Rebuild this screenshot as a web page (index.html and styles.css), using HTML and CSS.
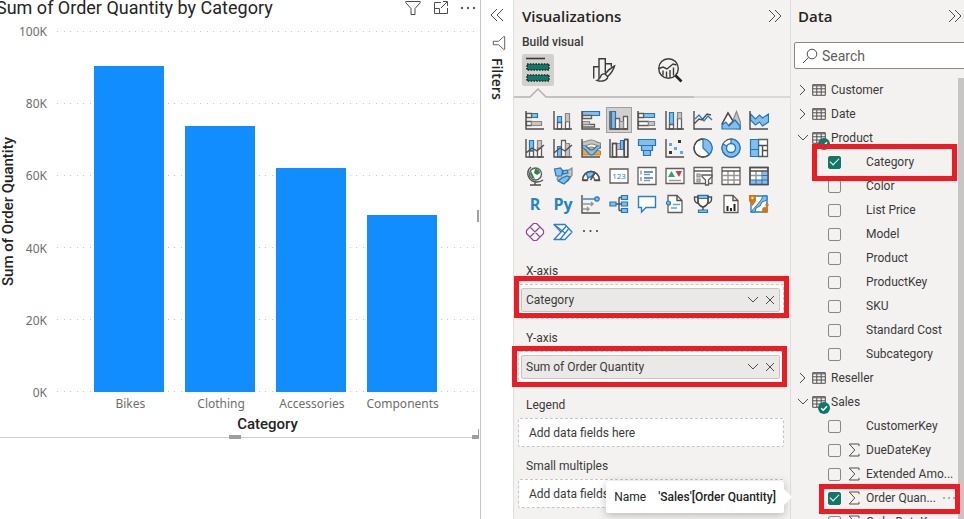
FILE: index.html
```html
<!DOCTYPE html>
<html lang="en">
<head>
<meta charset="utf-8">
<title>Report editor</title>
<link rel="stylesheet" href="styles.css">
</head>
<body>
<svg class="defs" aria-hidden="true">
  <symbol id="chevrons" viewBox="0 0 14 14"><path class="line" d="M1 1l6 6-6 6M7 1l6 6-6 6"/></symbol>
  <symbol id="chevron" viewBox="0 0 12 12"><path class="line" d="M1 3l5 5 5-5"/></symbol>
  <symbol id="cross" viewBox="0 0 10 10"><path class="line" d="M1 1l8 8M9 1L1 9"/></symbol>
  <symbol id="funnel" viewBox="0 0 16 16"><path class="line" d="M.8 1.5h14.4v1.2L10 8.5v6H6v-6L.8 2.7z"/></symbol>
  <symbol id="table" viewBox="0 0 14 12"><path class="line" d="M.7.7h12.6v10.6H.7zM.7 1.8h12.6M.7 4.8h12.6M.7 8h12.6M4.8 2v9M9.2 2v9"/></symbol>
  <symbol id="sigma" viewBox="0 0 12 14"><path class="line" d="M11 3.2V1H1.2l5.6 6-5.6 6H11v-2.2"/></symbol>
  <symbol id="badge" viewBox="0 0 12 12"><circle cx="6" cy="6" r="6" fill="#117865"/><path d="M3.2 6.2l2 2 3.800-4" fill="none" stroke="#fff" stroke-width="1.5"/></symbol>
</svg>

<main class="app">
  <section class="canvas">
    <article class="visual">
      <header class="visual-head">
        <h2>Sum of Order Quantity by Category</h2>
        <div class="visual-tools">
          <button aria-label="Filter"><svg width="18" height="16"><use href="#funnel"/></svg></button>
          <button aria-label="Focus mode"><svg width="16" height="16" viewBox="0 0 16 16"><path class="line" d="M8 2.500H1.500v11h13V8M1.500 8.500h5v5M8 8l6-6M10 1.500h4.500V6"/></svg></button>
          <button aria-label="More options"><svg width="16" height="16" viewBox="0 0 16 16" fill="#605e5c"><circle cx="2" cy="8" r="1.2"/><circle cx="8" cy="8" r="1.2"/><circle cx="14" cy="8" r="1.2"/></svg></button>
        </div>
      </header>
      <div class="chart">
        <div class="y-title"><span>Sum of Order Quantity</span></div>
        <div class="y-scale"><span>100K</span><span>80K</span><span>60K</span><span>40K</span><span>20K</span><span>0K</span></div>
        <div class="plot">
          <div class="gridlines"><i></i><i></i><i></i><i></i><i></i><i></i></div>
          <div class="bars">
            <div class="bar" style="height:90.3%"></div>
            <div class="bar" style="height:73.7%"></div>
            <div class="bar" style="height:62%"></div>
            <div class="bar" style="height:49.1%"></div>
          </div>
        </div>
        <div class="x-scale"><span>Bikes</span><span>Clothing</span><span>Accessories</span><span>Components</span></div>
        <div class="x-title">Category</div>
      </div>
      <span class="grip grip-bottom"></span>
      <span class="grip grip-right"></span>
      <span class="grip grip-corner"></span>
    </article>
  </section>

  <aside class="filters">
    <button aria-label="Expand filters"><svg class="flip" width="14" height="14"><use href="#chevrons"/></svg></button>
    <svg class="turn" width="14" height="14"><use href="#funnel"/></svg>
    <h2>Filters</h2>
  </aside>

  <aside class="viz">
    <header class="pane-head">
      <h2>Visualizations</h2>
      <button aria-label="Collapse visualizations"><svg width="14" height="14"><use href="#chevrons"/></svg></button>
    </header>
    <h3>Build visual</h3>
    <div class="tabs">
      <button class="tab on" aria-label="Build visual"><svg width="32" height="32" viewBox="0 0 32 32"><path d="M4 4.500h19" stroke="#3b3a39" stroke-width="1.6"/><path d="M5 10h22v6H5zM5 21h22v6H5z" fill="#117865" stroke="#252423" stroke-width="1.6" stroke-dasharray="1.6 1.2"/></svg></button>
      <button class="tab" aria-label="Format visual"><svg width="24" height="26" viewBox="0 0 24 26" fill="none" stroke="#3b3a39" stroke-width="1.4"><path d="M1.700 20V9.700H7V23M7 10V1.700h6.300v14M13.300 6.700h6v3M1.700 20v1.500"/><path d="M22.500 9c-3 1.500-7 5-9.500 8l2.600 2.500C18.600 17 21.500 12.500 22.500 9zM12.800 17c-2.300-.4-3.600.7-4.200 2.600-.5 1.700-1.600 3-3.600 3.700 3.400 1.400 8.300 1 10.200-1.800.7-1 .6-1.800.3-2.300" fill="#f3f2f1"/></svg></button>
      <button class="tab" aria-label="Analytics"><svg width="26" height="26" viewBox="0 0 26 26" fill="none" stroke="#3b3a39" stroke-width="1.4"><circle cx="11.5" cy="11.5" r="9.8"/><path d="M2 11.500l4-1.500 4 2 6-5 3.500 1M6 13.500v5M9.500 14.500v6M13 13v7.500M16.500 10.500v8"/><path d="M18.500 18.500l6 6" stroke="#252423" stroke-width="2.6"/></svg></button>
    </div>
    <svg class="tab-line" height="10" width="100%"><path d="M180 9h100" stroke="#dad8d6" stroke-width="2"/><path d="M0 9h16l8-8 8 8h148" fill="none" stroke="#b5b3b1" stroke-width="1.5"/></svg>

    <div class="gallery">
      <button aria-label="Stacked bar chart"><svg viewBox="0 0 20 20"><path class="b" d="M6.500 3.500h6v4h-6z"/><path class="w" d="M1.500 3.500h5v4h-5zM1.500 11.500h5v4h-5z"/><path class="g" d="M6.500 11.500h10v4h-10z"/><path class="k" d="M1 1v18h18"/></svg></button>
      <button aria-label="Stacked column chart"><svg viewBox="0 0 20 20"><path class="b" d="M4.500 6.500h4v6h-4z"/><path class="w" d="M4.500 12.500h4V19h-4zM12.500 11.500h4V19h-4z"/><path class="g" d="M12.500 3.500h4v8h-4z"/><path class="k" d="M1 1v18h18"/></svg></button>
      <button aria-label="Clustered bar chart"><svg viewBox="0 0 20 20"><path class="b" d="M1.500 1.500h17v4h-17z"/><path class="w" d="M1.500 5.500h9v3h-9zM1.500 14.500h12V17h-12z"/><path class="g" d="M1.500 11.500h7v3h-7z"/><path class="k" d="M1 1v18h18"/></svg></button>
      <button class="picked" aria-label="Clustered column chart"><svg viewBox="0 0 20 20"><path class="b" d="M2.500 1.500h4V19h-4z"/><path class="w" d="M6.500 8.500h4V19h-4zM14.500 6.500h4V19h-4z"/><path class="g" d="M10.500 11.500h4V19h-4z"/><path class="k" d="M1 1v18h18"/></svg></button>
      <button aria-label="100% stacked bar chart"><svg viewBox="0 0 20 20"><path class="b" d="M6.500 3.500h11v4h-11z"/><path class="w" d="M1.500 3.500h5v4h-5zM1.500 11.500h10v4h-10z"/><path class="g" d="M11.500 11.500h6v4h-6z"/><path class="k" d="M1 1v18h18"/></svg></button>
      <button aria-label="100% stacked column chart"><svg viewBox="0 0 20 20"><path class="b" d="M4.500 2.500h4v12h-4z"/><path class="w" d="M4.500 14.500h4V19h-4zM12.500 8.500h4V19h-4z"/><path class="g" d="M12.500 2.500h4v6h-4z"/><path class="k" d="M1 1v18h18"/></svg></button>
      <button aria-label="Line chart"><svg viewBox="0 0 20 20"><path class="bl" d="M2 9l4-4 5 6 4-5 4 4"/><path class="k" d="M1 14l5-5 3 1 5-6 4 1M1 1v18h18"/></svg></button>
      <button aria-label="Area chart"><svg viewBox="0 0 20 20"><path class="g" d="M9 18l6.500-16.500 4 11V19z"/><path class="w" d="M1 14L7 3l5 8-6 6z"/><path class="b" d="M1 19v-4l4-3 3 4 6-6 5 6v3z"/><path class="k" d="M1 14L7 3l5 8"/></svg></button>
      <button aria-label="Stacked area chart"><svg viewBox="0 0 20 20"><path class="b" d="M1.500 4l5 5 4-4 3 3 6-4v8l-6 4-3-4-4 3-5-5z"/><path class="k" d="M1 1v18h18"/></svg></button>

      <button aria-label="Line and stacked column chart"><svg viewBox="0 0 20 20"><path class="b" d="M4.500 2.500h4V13h-4z"/><path class="w" d="M4.500 13h4v6h-4zM12.500 10h4v9h-4z"/><path class="g" d="M12.500 2.500h4V10h-4z"/><path class="k" d="M1 1v18h18M1 15l6-5 5 3 7-6"/></svg></button>
      <button aria-label="Line and clustered column chart"><svg viewBox="0 0 20 20"><path class="b" d="M4.500 8.500h4V19h-4z"/><path class="w" d="M8.500 2.500h4V19h-4z"/><path class="g" d="M12.500 5.500h4V19h-4z"/><path class="k" d="M1 1v18h18M1 15l6-5 5 3 7-6"/></svg></button>
      <button aria-label="Ribbon chart"><svg viewBox="0 0 20 20"><path d="M1.500 12c4 0 5-3 9-3s5 4 9 4v4H1.500z" fill="#f2a33c" stroke="#d67a10"/><path class="b" d="M1.500 6c4 0 5 6 9 6s5-6 9-6v4c-4 0-5 7-9 7s-5-7-9-7z"/><path class="g" d="M1.500 4c4 0 5-2 9-2s5 3 9 3v3c-4 0-5-2-9-2s-5 3-9 1z"/><path class="k" d="M1 1v18h18"/></svg></button>
      <button aria-label="Waterfall chart"><svg viewBox="0 0 20 20"><path class="w" d="M3.500 5.500h4V19h-4zM15.500 1.500h3V19h-3z"/><path class="g" d="M7.500 5.500h4v6h-4z"/><path class="b" d="M11.500 2.500h3v9h-3z"/><path class="k" d="M1 1v18h18V1.500h-4M3.500 18V5.500h4V18M15 18V2"/></svg></button>
      <button aria-label="Funnel"><svg viewBox="0 0 20 20"><path class="b" d="M1.500 1.500h17v6h-17zM4.500 7.500h11v5h-11zM6.500 12.500h7v5h-7z"/></svg></button>
      <button aria-label="Scatter chart"><svg viewBox="0 0 20 20"><path d="M13 2h3v3h-3zM4 13h3v3H4z" fill="#3b3a39"/><path d="M4 5h3v3H4zM9 9h3v3H9zM15 13h3v3h-3z" fill="#62a8e0"/><path class="k" d="M1 1v18h18"/></svg></button>
      <button aria-label="Pie chart"><svg viewBox="0 0 20 20"><circle class="w" cx="10" cy="10" r="9"/><path class="b" d="M10 1v9l6.400 6.400A9 9 0 0 0 10 1z"/><path class="k" d="M16.400 16.400A9 9 0 1 1 10 1"/></svg></button>
      <button aria-label="Donut chart"><svg viewBox="0 0 20 20"><circle class="w" cx="10" cy="10" r="9"/><path class="b" d="M10 1a9 9 0 1 1-8 5l4 2a4.500 4.500 0 1 0 4-2.500z"/><circle cx="10" cy="10" r="4.5" fill="#f3f2f1" stroke="#1f77be" stroke-width="1.3"/></svg></button>
      <button aria-label="Treemap"><svg viewBox="0 0 20 20"><path class="w" d="M9.500 1.500h9v17h-9z"/><path class="b" d="M1.500 1.500h8v10h-8zM1.500 11.500h8v7h-8z"/><path d="M9.500 7.500h9M13.500 7.500v11M13.500 12.500h5" class="k"/></svg></button>

      <button aria-label="Map"><svg viewBox="0 0 20 20"><circle cx="10.5" cy="8" r="6" fill="#fff" stroke="#605e5c" stroke-width="1.4"/><path d="M10 3c3 0 5 2 5 4l-3 2-3-2zM6 5l2 4 2 4-3-1-2-4z" fill="#258a46"/><path class="k" d="M6 1C0 6 3 16 12 16c2 0 4-.5 6-2M10 16v3M5 19h11"/></svg></button>
      <button aria-label="Filled map"><svg viewBox="0 0 20 20"><path class="g" d="M9 4l5 1 5-3v7l-4 6-6 2-5-4z"/><path class="b" d="M1.500 3l6-1 2 3-1 5H3zM9 12l5-2 3 1-3 4-3 3-6-3zM10 5l4-1 1 3-5 1z"/></svg></button>
      <button aria-label="Gauge"><svg viewBox="0 0 20 20"><path class="w" d="M1.500 14a8.500 8.500 0 0 1 17 0h-5a3.500 3.500 0 0 0-7 0z"/><path class="b" d="M5 7a8.500 8.500 0 0 1 9-.5L10 11a3.500 3.500 0 0 0-3 1z"/><path class="k" d="M9.500 14L14 7M1.500 14.500h5M1.500 14a8.500 8.500 0 0 1 17 0v.5h-5"/></svg></button>
      <button aria-label="Card"><svg viewBox="0 0 20 20"><path class="w" d="M1 3h18v14H1z"/><text x="10" y="13" class="digits">123</text></svg></button>
      <button aria-label="Multi-row card"><svg viewBox="0 0 20 20"><path class="w" d="M1 1.500h18v17H1z"/><path class="bl" d="M7 6h9M7 12h9"/><path class="gl" d="M4 4.500v4M4 11v4M7 8.500h6M7 14.500h6"/></svg></button>
      <button aria-label="KPI"><svg viewBox="0 0 20 20"><path class="w" d="M1 2.500h18v15H1z"/><path d="M3 11l3.500-6L10 11z" fill="#3ba45d"/><path d="M10.500 5h6.500l-3 6z" fill="#e0344a"/><path class="gl" d="M4 14.500h12"/></svg></button>
      <button aria-label="Slicer"><svg viewBox="0 0 20 20"><path class="w" d="M1 1.500h18v16H1z"/><path class="k" d="M1 5h18"/><path class="g" d="M4 8h3v3H4zM4 13h3v3H4z"/><path class="w" d="M9 9h10v1.500L15.500 14v5h-3v-5L9 10.500z"/></svg></button>
      <button aria-label="Table"><svg viewBox="0 0 20 20"><path class="w" d="M1 1.500h18v17H1z"/><path class="gl" d="M1 9.500h18M1 14h18M7 5v13M13 5v13"/><path class="k" d="M1 5h18"/></svg></button>
      <button aria-label="Matrix"><svg viewBox="0 0 20 20"><path class="w" d="M1 1.500h18v17H1z"/><path class="gl" d="M1 9.500h12M7 5v9"/><path d="M13.500 5.500H19v13H1V14h12.500z" fill="#83beec"/><path d="M13 5v13M7 14v4M1 14h18M13 9.500h6" fill="none" stroke="#1f77be"/><path class="k" d="M1 5h18M1 1.500h18v17H1z"/></svg></button>

      <button class="lang" aria-label="R script visual">R</button>
      <button class="lang" aria-label="Python visual">Py</button>
      <button aria-label="Key influencers"><svg viewBox="0 0 20 20"><path class="k" d="M1 1v18h18"/><path class="bl" d="M2 5h12"/><circle class="b" cx="16" cy="5" r="2.2"/><path class="gl" d="M2 10h10M2 15h6M10 8l2 2-2 2M6 13l2 2-2 2"/></svg></button>
      <button aria-label="Decomposition tree"><svg viewBox="0 0 20 20"><path class="k" d="M7 10h6M10 3.500v13M10 3.500h3M10 16.500h3"/><path class="b" d="M1 8h6v4H1zM12.500 1.500h6v4h-6zM12.500 8h6v4h-6zM12.500 14.500h6v4h-6z"/></svg></button>
      <button aria-label="Q&amp;A"><svg viewBox="0 0 20 20"><path d="M1.500 2.500h17v11H9L4.500 18v-4.500h-3z" fill="#fff" stroke="#2b7fc3" stroke-width="1.4"/></svg></button>
      <button aria-label="Smart narrative"><svg viewBox="0 0 20 20"><path class="w" d="M3 1.500h9l5 5v12H3z"/><path class="k" d="M12 1.500v5h5"/><path d="M8 10.500h7M6 14h6" stroke="#62a8e0" stroke-width="1.3"/><circle class="b" cx="3.5" cy="9" r="2"/></svg></button>
      <button aria-label="Goals"><svg viewBox="0 0 20 20"><path class="w" d="M5 1.500h10V8q-1 4-5 5-4-1-5-5z"/><path class="b" d="M5 1.500h10v3H5zM5.500 16h9v2.500h-9z"/><path class="k" d="M5 3H1.500v2q0 4 4.500 4.500M15 3h3.500v2q0 4-4.500 4.500M10 13v3M5 2v6q1 4 5 5 4-1 5-5V2"/></svg></button>
      <button aria-label="Paginated report"><svg viewBox="0 0 20 20"><path class="w" d="M3 1.500h9l5 5v12H3z"/><path class="k" d="M12 1.500v5h5"/><path d="M5.500 12h2v5h-2zM9 14h2v3H9zM12.500 10h2v7h-2z" fill="#252423"/></svg></button>
      <button aria-label="ArcGIS Maps"><svg viewBox="0 0 20 20"><path d="M2 2h16v16H2z" fill="#fff" stroke="#2b7fc3" stroke-width="1.4"/><path d="M18 2v4l-5 2-2 4-4 2-1 4H2l6-7 4-5 2-4z" fill="#83beec" stroke="#1f77be"/><path d="M0 1h7v6l-3.500 5L0 7z" fill="#d9730d"/><circle cx="3.5" cy="4" r="1.2" fill="#fff"/><circle cx="16" cy="16" r="3" fill="#d9730d"/><circle cx="18" cy="11" r="1.7" fill="#d9730d"/></svg></button>

      <button aria-label="Power Apps"><svg viewBox="0 0 20 20" fill="#fff" stroke="#9b3fa5" stroke-width="1.2" stroke-linejoin="round"><path d="M8.500 1.500h3l7 7v3l-7 7h-3l-7-7v-3zM5 5l10 10M15 5L5 15"/></svg></button>
      <button aria-label="Power Automate"><svg viewBox="0 0 20 20" fill="#fff" stroke="#2b7cd3" stroke-width="1.3" stroke-linejoin="round"><path d="M1 2.500h11l7 7.500-7 7.500H1L8 10z"/><path d="M8 10l5.500-6M7 17.500L15.500 7M1 2.500L12 11"/></svg></button>
      <button aria-label="More visuals"><svg viewBox="0 0 20 20" fill="#3b3a39"><circle cx="3" cy="9" r="1"/><circle cx="9.5" cy="9" r="1"/><circle cx="16" cy="9" r="1"/></svg></button>
    </div>

    <div class="wells">
      <section><h4>X-axis</h4>
        <div class="well mark mark-x"><div class="pill"><span>Category</span><button aria-label="Category options"><svg width="12" height="12"><use href="#chevron"/></svg></button><button aria-label="Remove Category"><svg width="10" height="10"><use href="#cross"/></svg></button></div></div>
      </section>
      <section><h4>Y-axis</h4>
        <div class="well mark mark-y"><div class="pill"><span>Sum of Order Quantity</span><button aria-label="Sum of Order Quantity options"><svg width="12" height="12"><use href="#chevron"/></svg></button><button aria-label="Remove Sum of Order Quantity"><svg width="10" height="10"><use href="#cross"/></svg></button></div></div>
      </section>
      <section><h4>Legend</h4><div class="well empty">Add data fields here</div></section>
      <section><h4>Small multiples</h4><div class="well empty">Add data fields here</div></section>
    </div>
    <div class="tooltip" role="tooltip"><span>Name</span><b>'Sales'[Order Quantity]</b></div>
  </aside>

  <aside class="data">
    <header class="pane-head">
      <h2>Data</h2>
      <button aria-label="Collapse data"><svg width="14" height="14"><use href="#chevrons"/></svg></button>
    </header>
    <div class="search">
      <svg width="16" height="16" viewBox="0 0 16 16"><circle class="line" cx="10" cy="6" r="4.8"/><path class="line" d="M6.500 9.500L1 15"/></svg>
      <input type="text" placeholder="Search" aria-label="Search">
    </div>
    <div class="tree-wrap">
      <ul class="tree">
        <li class="entity"><svg class="caret shut" width="12" height="12"><use href="#chevron"/></svg><svg width="14" height="12"><use href="#table"/></svg><span>Customer</span></li>
        <li class="entity"><svg class="caret shut" width="12" height="12"><use href="#chevron"/></svg><svg width="14" height="12"><use href="#table"/></svg><span>Date</span></li>
        <li class="entity"><svg class="caret" width="12" height="12"><use href="#chevron"/></svg><svg width="14" height="12"><use href="#table"/></svg><svg class="badge" width="12" height="12"><use href="#badge"/></svg><span>Product</span></li>
        <li class="field mark mark-cat"><label><input type="checkbox" checked><i></i><span>Category</span></label></li>
        <li class="field"><label><input type="checkbox"><i></i><span>Color</span></label></li>
        <li class="field"><label><input type="checkbox"><i></i><span>List Price</span></label></li>
        <li class="field"><label><input type="checkbox"><i></i><span>Model</span></label></li>
        <li class="field"><label><input type="checkbox"><i></i><span>Product</span></label></li>
        <li class="field"><label><input type="checkbox"><i></i><span>ProductKey</span></label></li>
        <li class="field"><label><input type="checkbox"><i></i><span>SKU</span></label></li>
        <li class="field"><label><input type="checkbox"><i></i><span>Standard Cost</span></label></li>
        <li class="field"><label><input type="checkbox"><i></i><span>Subcategory</span></label></li>
        <li class="entity"><svg class="caret shut" width="12" height="12"><use href="#chevron"/></svg><svg width="14" height="12"><use href="#table"/></svg><span>Reseller</span></li>
        <li class="entity"><svg class="caret" width="12" height="12"><use href="#chevron"/></svg><svg width="14" height="12"><use href="#table"/></svg><svg class="badge" width="12" height="12"><use href="#badge"/></svg><span>Sales</span></li>
        <li class="field"><label><input type="checkbox"><i></i><span>CustomerKey</span></label></li>
        <li class="field"><label><input type="checkbox"><i><svg width="12" height="14"><use href="#sigma"/></svg></i><span>DueDateKey</span></label></li>
        <li class="field"><label><input type="checkbox"><i><svg width="12" height="14"><use href="#sigma"/></svg></i><span>Extended Amo...</span></label></li>
        <li class="field mark mark-qty"><label><input type="checkbox" checked><i><svg width="12" height="14"><use href="#sigma"/></svg></i><span>Order Quan...</span></label><button aria-label="More options"><svg width="12" height="4" viewBox="0 0 12 4" fill="#605e5c"><circle cx="1" cy="2" r=".8"/><circle cx="6" cy="2" r=".8"/><circle cx="11" cy="2" r=".8"/></svg></button></li>
        <li class="field"><label><input type="checkbox"><i><svg width="12" height="14"><use href="#sigma"/></svg></i><span>OrderDateKey</span></label></li>
      </ul>
      <div class="scrollbar"></div>
    </div>
  </aside>
</main>
</body>
</html>
```

FILE: styles.css
```css
* { box-sizing: border-box; }
body {
  margin: 0;
  overflow: hidden;
  color: #3b3a39;
  background: #fff;
  font: 12px/16px Roboto, "Open Sans", sans-serif;
}
h2, h3, h4, ul { margin: 0; padding: 0; font-size: 12px; font-weight: 400; }
button { display: grid; place-items: center; padding: 0; border: 0; background: none; color: inherit; font: inherit; }
svg { display: block; flex: none; }
.defs { position: absolute; width: 0; height: 0; }
.line { fill: none; stroke: #504e4c; stroke-width: 1; }

.app { display: grid; grid-template-columns: minmax(0, 1fr) 32px 277px 174px; height: 100vh; }

/* Report canvas */
.canvas { border-right: 1px solid #c8c6c4; overflow: hidden; }
.visual { position: relative; margin-right: 1px; padding-bottom: 4px; border-bottom: 1px solid #d2d0ce; }
.visual-head { display: flex; justify-content: space-between; height: 31px; }
.visual-head h2 { margin-left: -4px; font: 400 18px/16px Roboto, sans-serif; color: #252423; white-space: nowrap; }
.visual-tools { display: flex; gap: 11px; height: 16px; margin-right: 3px; }
.chart { display: grid; grid-template-columns: 12px 36px minmax(0, 1fr); column-gap: 4px; grid-template-rows: 361px 24px 17px; }
.y-title { display: grid; place-items: center; color: #252423; }
.y-title span { writing-mode: vertical-rl; transform: rotate(180deg); font: 500 15px/16px Roboto, sans-serif; white-space: nowrap; }
.y-scale { display: flex; flex-direction: column; justify-content: space-between; margin: -7px 5px -9px 0; text-align: right; }
.y-scale, .x-scale { font-family: "Noto Sans", "Open Sans", sans-serif; color: #706e6c; }
.plot { display: grid; margin: 0 2px 0 1px; }
.plot > * { grid-area: 1 / 1; }
.gridlines { display: flex; flex-direction: column; justify-content: space-between; }
.gridlines i { height: 1px; background: repeating-linear-gradient(to right, #c8c6c4 0 1px, transparent 1px 7px, #c8c6c4 7px 8px, transparent 8px 13px); }
.bars, .x-scale { display: grid; grid-template-columns: repeat(4, minmax(0, 1fr)); padding: 0 30px 0 27px; }
.bars { align-items: end; justify-items: center; }
.bar { width: 77%; background: #118dff; }
.x-scale { grid-column: 3; margin: 0 1px 0 2px; align-items: center; text-align: center; }
.x-title { grid-column: 3; text-align: center; font: 500 15px/16px Roboto, sans-serif; color: #252423; }
.grip { position: absolute; background: #a19f9d; }
.grip-bottom { left: 229px; bottom: -2px; width: 12px; height: 4px; }
.grip-right { right: 0; top: 210px; width: 2px; height: 12px; }
.grip-corner { right: 0; bottom: -2px; width: 7px; height: 10px; background: none; border-right: 1px solid #a19f9d; border-bottom: 4px solid #a19f9d; }

/* Filters rail */
.filters { display: flex; flex-direction: column; align-items: center; gap: 14px; padding-top: 8px; }
.filters h2 { writing-mode: vertical-rl; margin-top: -6px; font: 600 14px/16px "Open Sans", sans-serif; color: #252423; }
.flip { transform: scaleX(-1); }
.turn { transform: rotate(90deg); margin: 0 0 0 4px; }

/* Panes */
.viz, .data { position: relative; min-width: 0; background: #f3f2f1; border-left: 1px solid #e1dfdd; }
.pane-head { display: flex; align-items: center; justify-content: space-between; height: 32px; padding: 0 8px; }
.pane-head h2 { font: 600 15px/20px "Open Sans", sans-serif; color: #252423; }
.viz h3 { margin: 2px 8px 4px; font-weight: 500; }
.tabs { display: flex; gap: 34px; padding: 0 8px; }
.tab { width: 32px; height: 32px; border-radius: 2px; }
.tab.on { background: #d2d0ce; }
.tab-line { margin-top: 2px; }
.gallery { display: grid; grid-template-columns: repeat(9, 28px); grid-auto-rows: 28px; margin: 8px 0 0 7px; place-items: center; }
.gallery button { width: 24px; height: 24px; }
.gallery svg { width: 20px; height: 20px; }
.gallery .picked { background: #d2d0ce; outline: 1px solid #a19f9d; }
.k, .bl, .gl { fill: none; stroke: #504e4c; stroke-width: 1.4; }
.bl { stroke: #2b7fc3; }
.gl { stroke: #979593; }
.b { fill: #83beec; stroke: #1f77be; stroke-width: 1.2; }
.g { fill: #c8c6c4; stroke: #8a8886; stroke-width: 1.2; }
.w { fill: #fff; stroke: #605e5c; stroke-width: 1.3; }
.digits { font: 8px "Open Sans", sans-serif; fill: #1f77be; text-anchor: middle; }
.gallery .lang { font: 700 16px/20px "Open Sans", sans-serif; color: #2484c6; }

.wells { display: grid; gap: 11px; margin-top: 17px; padding: 0 6px 0 4px; }
.wells h4 { margin: 0 0 5px 8px; }
.well { padding: 3px 3px 3px 2px; border: 1px dashed #c8c6c4; border-radius: 2px; background: #fff; }
.well.mark { height: 35px; }
.well.empty { padding: 6px 10px 5px; }
.pill { display: flex; align-items: center; gap: 6px; height: 24px; padding: 0 4px; border: 1px solid #c8c6c4; border-radius: 2px; background: #ebe9e7; }
.pill span { flex: 1; }

.mark { position: relative; }
.mark::after { content: ""; position: absolute; border: 5px solid #ed1c24; pointer-events: none; }
.mark-x::after { inset: -9px -6px 0 -5px; }
.mark-y::after { inset: -6px -4px -2px -7px; }
.mark-cat::after { inset: -6px 1px -7px 21px; }
.mark-qty::after { inset: -2px -2px -4px 28px; }

.tooltip { position: absolute; z-index: 2; right: 6px; bottom: 6px; display: flex; gap: 12px; padding: 8px; color: #252423; background: #fff; border-radius: 2px; box-shadow: 0 2px 8px rgba(0, 0, 0, .25); white-space: nowrap; }
.tooltip b { font-weight: 500; }
.tooltip::after { content: ""; position: absolute; left: 100%; top: 8px; border: 8px solid transparent; border-left-color: #fff; border-right: 0; }

/* Data pane */
.data { display: flex; flex-direction: column; height: 100vh; overflow: hidden; }
.data .pane-head { flex: none; padding: 0 2px 0 7px; }
.search { display: flex; align-items: center; gap: 4px; flex: none; height: 27px; margin: 10px -4px 9px 3px; padding-left: 7px; border: 1px solid #8a8886; border-radius: 2px; background: #fff; }
.search input { min-width: 0; flex: 1; padding: 0; border: 0; outline: 0; background: none; color: #605e5c; font: 14px/20px Roboto, sans-serif; }
.search input::placeholder { color: #605e5c; }
.tree-wrap { display: flex; flex: 1; min-height: 0; }
.tree { flex: 1; min-width: 0; list-style: none; }
.scrollbar { width: 6px; background: #c8c6c4; }
.entity { position: relative; display: flex; align-items: center; gap: 3px; height: 24px; padding-left: 6px; }
.entity span { margin-left: 2px; }
.shut { transform: rotate(-90deg); }
.badge { position: absolute; left: 27px; top: 12px; }
.field { display: flex; align-items: center; height: 24px; padding-left: 37px; }
.field label { display: flex; align-items: center; flex: 1; white-space: nowrap; }
.field i { display: grid; width: 25px; padding-left: 7px; }
.field input { appearance: none; flex: none; width: 13px; height: 13px; margin: 0; border: 1px solid #8a8886; border-radius: 2px; }
.field input:checked { border-color: #117865; background: #117865; display: grid; place-items: center; }
.field input:checked::after { content: ""; width: 8px; height: 4px; margin-top: -3px; border: solid #fff; border-width: 0 0 1px 1px; transform: rotate(-45deg); }
.mark-qty button { margin-right: 3px; }
```
